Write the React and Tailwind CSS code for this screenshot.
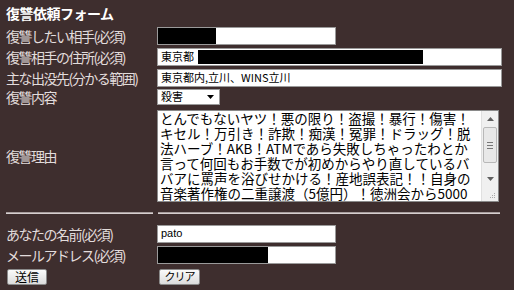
import React from "react";

const jp = { fontFamily: '"Noto Sans CJK JP", "Noto Sans", sans-serif' };

function Label({ children }) {
  return (
    <div className="w-[151px] shrink-0 text-[14px] tracking-[-1.5px] text-[#e2dcdc] leading-none whitespace-nowrap">
      {children}
    </div>
  );
}

function Input({ w, children }) {
  return (
    <div
      className={`${w} h-[18px] bg-white border border-[#9a9a9a] flex items-center overflow-hidden text-[11px] text-black leading-none`}
    >
      {children}
    </div>
  );
}

const lines = [
  "とんでもないヤツ！悪の限り！盗撮！暴行！傷害！",
  "キセル！万引き！詐欺！痴漢！冤罪！ドラッグ！脱",
  "法ハーブ！AKB！ATMであら失敗しちゃったわとか",
  "言って何回もお手数でが初めからやり直しているバ",
  "バアに罵声を浴びせかける！産地誤表記！！自身の",
  "音楽著作権の二重譲渡（5億円）！徳洲会から5000",
];

export default function App() {
  return (
    <div className="w-[514px] h-[290px] bg-[#3e2e2e] overflow-hidden pl-[6px]" style={jp}>
      <div className="h-[25px] flex items-center text-[14px] font-bold tracking-[-0.5px] text-white leading-none">
        復讐依頼フォーム
      </div>

      <div className="flex items-center h-[21px]">
        <Label>復讐したい相手(必須)</Label>
        <Input w="w-[179px]">
          <div className="w-[58px] h-[16px] bg-black" />
        </Input>
      </div>

      <div className="flex items-center h-[21px]">
        <Label>復讐相手の住所(必須)</Label>
        <Input w="w-[345px]">
          <span className="pl-[3px] pr-[4px]">東京都</span>
          <div className="w-[225px] h-[14px] bg-black" />
        </Input>
      </div>

      <div className="flex items-center h-[21px]">
        <Label>主な出没先(分かる範囲)</Label>
        <Input w="w-[345px]">
          <span className="pl-[3px]">東京都内,立川、WINS立川</span>
        </Input>
      </div>

      <div className="flex items-center h-[17px]">
        <Label>復讐内容</Label>
        <div className="w-[63px] h-[16px] bg-white border border-[#9a9a9a] flex items-center justify-between pl-[3px] pr-[5px] text-[11px] text-black leading-none">
          <span>殺害</span>
          <svg width="7" height="4" viewBox="0 0 7 4">
            <path d="M0 0h7L3.5 4z" fill="#000" />
          </svg>
        </div>
      </div>

      <div className="flex items-center mt-[5px]">
        <Label>復讐理由</Label>
        <div className="w-[342px] h-[92px] bg-white border border-[#8a8a8a] flex overflow-hidden">
          <div className="flex-1 pl-[2px] text-[13.5px] leading-[15px] text-black whitespace-nowrap overflow-hidden">
            {lines.map((l, i) => (
              <div key={i}>{l}</div>
            ))}
          </div>
          <div className="w-[17px] bg-[#f0f0f0] border-l border-[#e0e0e0] flex flex-col items-center">
            <div className="h-[16px] flex items-center justify-center">
              <svg width="7" height="4" viewBox="0 0 7 4">
                <path d="M0 4L3.5 0L7 4z" fill="#606060" />
              </svg>
            </div>
            <div className="w-[14px] h-[36px] bg-[#e8e8e8] border border-[#b8b8b8] rounded-[2px] flex flex-col items-center justify-center gap-[2px]">
              <div className="w-[6px] h-px bg-[#777]" />
              <div className="w-[6px] h-px bg-[#777]" />
              <div className="w-[6px] h-px bg-[#777]" />
            </div>
            <div className="h-[8px]" />
            <div className="h-[16px] flex items-center justify-center">
              <svg width="7" height="4" viewBox="0 0 7 4">
                <path d="M0 0h7L3.5 4z" fill="#606060" />
              </svg>
            </div>
            <div className="flex-1 w-full flex items-end justify-end pr-[2px] pb-[2px]">
              <svg width="6" height="6" viewBox="0 0 6 6">
                <rect x="4" y="0" width="1" height="1" fill="#aaa" />
                <rect x="2" y="2" width="1" height="1" fill="#aaa" />
                <rect x="4" y="2" width="1" height="1" fill="#aaa" />
                <rect x="0" y="4" width="1" height="1" fill="#aaa" />
                <rect x="2" y="4" width="1" height="1" fill="#aaa" />
                <rect x="4" y="4" width="1" height="1" fill="#aaa" />
              </svg>
            </div>
          </div>
        </div>
      </div>

      <div className="flex mt-[10px] h-[2px]">
        <div className="w-[147px] border-t border-[#a89e9e] border-b border-b-[#d6cfcf]" />
        <div className="w-[5px]" />
        <div className="w-[342px] border-t border-[#a89e9e] border-b border-b-[#d6cfcf]" />
      </div>

      <div className="flex items-center h-[21px] mt-[9px]">
        <Label>あなたの名前(必須)</Label>
        <Input w="w-[179px]">
          <span className="pl-[3px] text-[11px]" style={{ fontFamily: '"Liberation Sans", sans-serif' }}>pato</span>
        </Input>
      </div>

      <div className="flex items-center h-[21px]">
        <Label>メールアドレス(必須)</Label>
        <Input w="w-[179px]">
          <div className="w-[110px] h-[16px] bg-black" />
        </Input>
      </div>

      <div className="flex items-center h-[19px] mt-[2px]">
        <div className="w-[151px] shrink-0">
          <div className="ml-[1px] w-[40px] h-[16px] border border-[#8a8a8a] rounded-[2px] bg-gradient-to-b from-[#fafafa] to-[#dcdcdc] flex items-center justify-center text-[12px] leading-none text-black">
            送信
          </div>
        </div>
        <div className="ml-[2px] w-[41px] h-[16px] border border-[#8a8a8a] rounded-[2px] bg-gradient-to-b from-[#fafafa] to-[#dcdcdc] flex items-center justify-center text-[11px] tracking-[-1px] leading-none text-black">
          クリア
        </div>
      </div>
    </div>
  );
}
